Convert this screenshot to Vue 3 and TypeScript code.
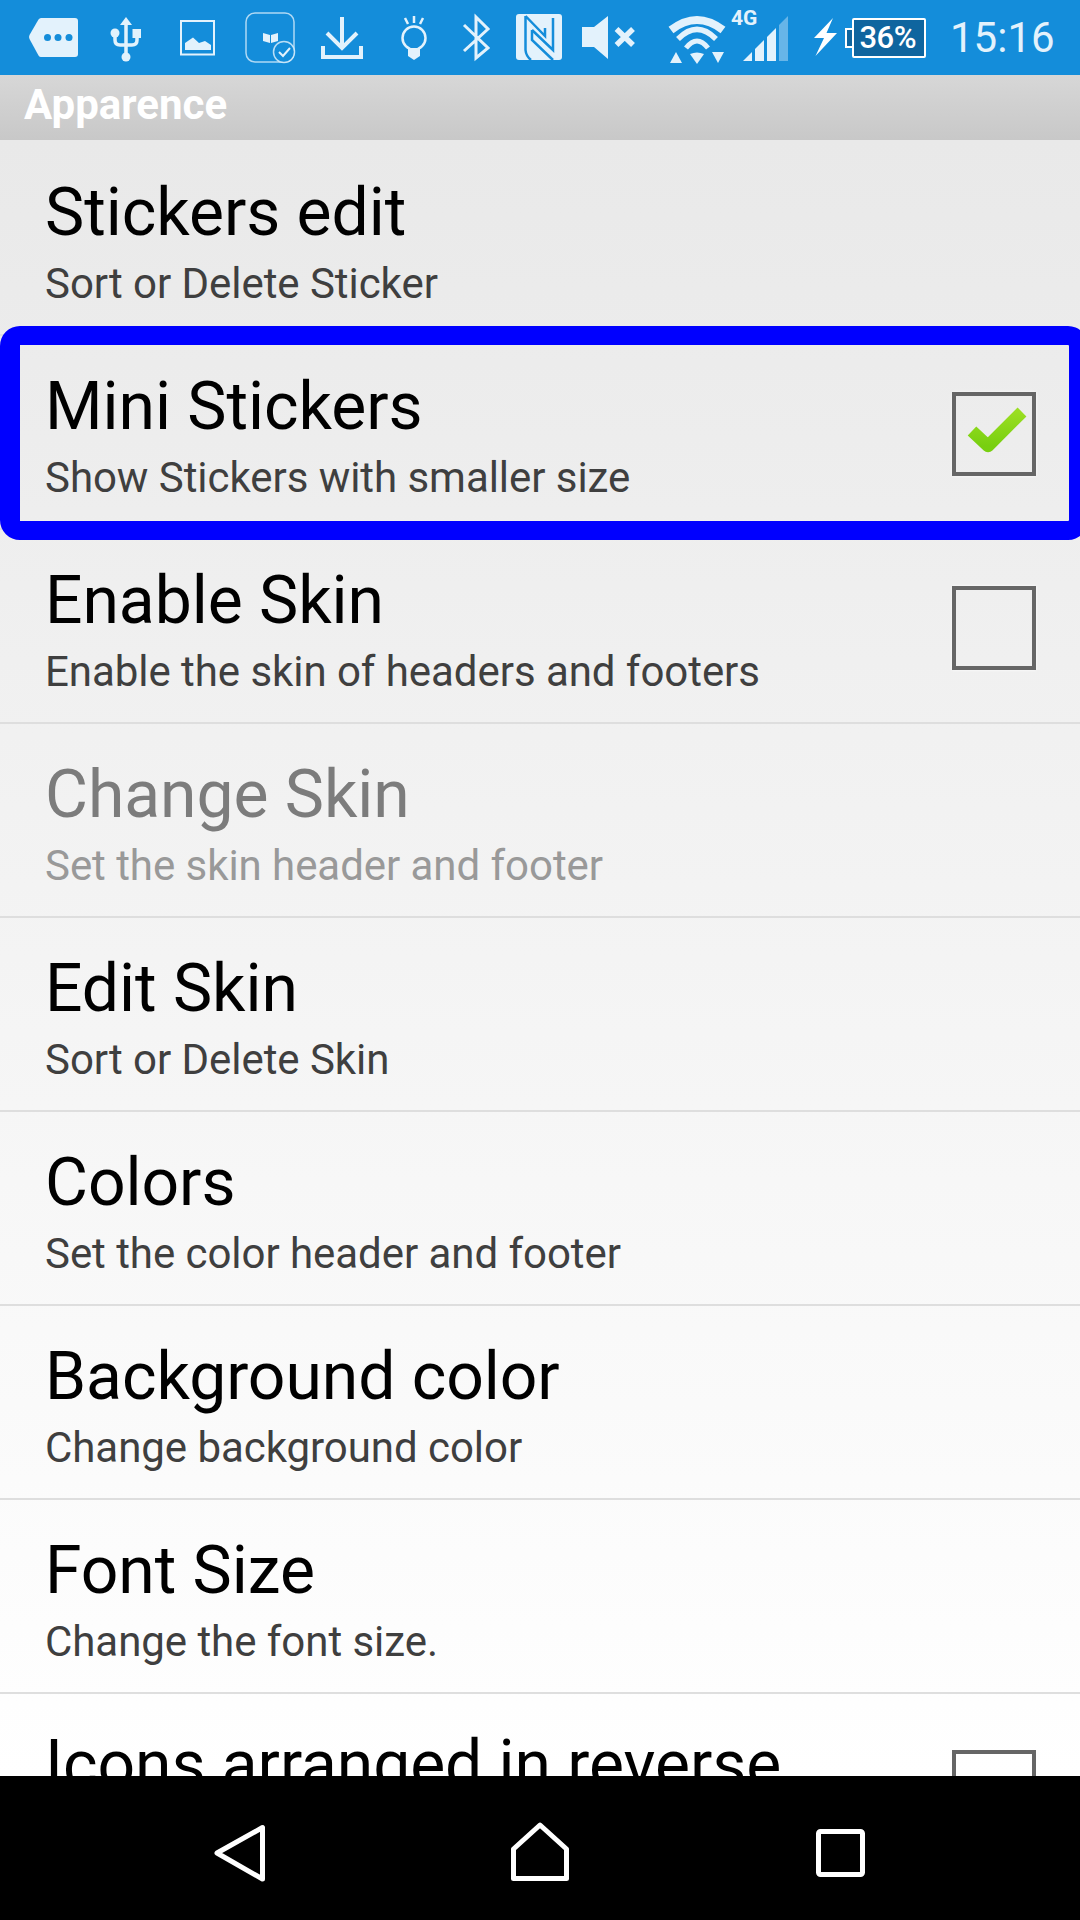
<template>
  <div class="screen">
    <div class="status-bar">
      <svg class="ic" width="80" height="75" viewBox="20 0 80 75">
        <path d="M41 18H75q3 0 3 3V54q0 3-3 3H41q-1.500 0-2.500-1.500L29.500 39q-1-2 0-4L38.500 19.500Q39.500 18 41 18Z" fill="#e3f2fc" />
        <circle cx="47.500" cy="37.500" r="3.500" fill="#148dda" />
        <circle cx="58" cy="37.500" r="3.500" fill="#148dda" />
        <circle cx="69" cy="37.500" r="3.500" fill="#148dda" />
      </svg>
      <svg class="ic" width="70" height="75" viewBox="100 0 70 75">
        <path d="M126 17l6 8H120Z" fill="#e3f2fc" />
        <path d="M126 24V55M115 33V40q0 5 5 5H132q5 0 5-5V36" fill="none" stroke="#e3f2fc" stroke-width="3.500" />
        <circle cx="126" cy="57" r="4.500" fill="#e3f2fc" />
        <circle cx="115" cy="33" r="4.500" fill="#e3f2fc" />
        <rect x="132.500" y="29" width="8.500" height="9" fill="#e3f2fc" />
      </svg>
      <svg class="ic" width="65" height="75" viewBox="170 0 65 75">
        <rect x="181" y="21" width="33" height="33.500" fill="none" stroke="#e3f2fc" stroke-width="2" />
        <path d="M185 50V43L193 37.500L199 43L205 41L211 45V50Z" fill="#e3f2fc" />
      </svg>
      <svg class="ic" width="70" height="75" viewBox="235 0 70 75">
        <rect x="246" y="13" width="48" height="49" rx="9" fill="none" stroke="#e3f2fc" stroke-opacity=".75" stroke-width="1.500" />
        <path d="M263 33l7 2V43l-7-2ZM271 35l7-2V41l-7 2Z" fill="#e3f2fc" />
        <circle cx="284" cy="52" r="10.500" fill="#148dda" stroke="#e3f2fc" stroke-opacity=".8" stroke-width="1.500" />
        <path d="M279 52l4 4 7-8" fill="none" stroke="#e3f2fc" stroke-width="2" />
      </svg>
      <svg class="ic" width="75" height="75" viewBox="305 0 75 75">
        <path d="M342 17V47M327 33L342 48L357 33" fill="none" stroke="#e3f2fc" stroke-width="4" />
        <path d="M323 46V57H361V46" fill="none" stroke="#e3f2fc" stroke-width="4" />
      </svg>
      <svg class="ic" width="70" height="75" viewBox="380 0 70 75">
        <circle cx="414" cy="38" r="11.500" fill="none" stroke="#e3f2fc" stroke-width="2.500" />
        <path d="M408 48H420V56L414 60L408 56Z" fill="#e3f2fc" />
        <path d="M414 16V23M405 18L408 24M423 18L420 24" fill="none" stroke="#e3f2fc" stroke-width="2.500" />
      </svg>
      <svg class="ic" width="55" height="75" viewBox="450 0 55 75">
        <path d="M464 25L488 48L476 58V17L488 29L464 51" fill="none" stroke="#e3f2fc" stroke-width="3" />
      </svg>
      <svg class="ic" width="65" height="75" viewBox="505 0 65 75">
        <rect x="516" y="14" width="46" height="46" rx="3" fill="#e3f2fc" />
        <path d="M525.500 16V50Q526 56 531 60M525.500 16L545 36V28M553 18V50L532 30" fill="none" stroke="#148dda" stroke-width="2.500" />
        <path d="M532 30V40L553 60" fill="none" stroke="#148dda" stroke-width="2.500" />
      </svg>
      <svg class="ic" width="90" height="75" viewBox="570 0 90 75">
        <path d="M582 27H594L608 16V59L594 47H582Z" fill="#e3f2fc" />
        <path d="M616.500 29L633 45M633 29L616.500 45" fill="none" stroke="#e3f2fc" stroke-width="5.500" />
      </svg>
      <svg class="ic" width="68" height="75" viewBox="660 0 68 75">
        <path d="M671 30Q697 10 723 30" fill="none" stroke="#e3f2fc" stroke-width="8" />
        <path d="M678 39Q697 20 716 39" fill="none" stroke="#e3f2fc" stroke-width="5.500" />
        <path d="M686 48Q697 34 708 48" fill="none" stroke="#e3f2fc" stroke-width="5" />
        <path d="M690 54Q697 51 704 54L697 64Z" fill="#e3f2fc" />
        <path d="M676 52L682 63H670Z" fill="#e3f2fc" />
        <path d="M712 52H724L718 63Z" fill="#e3f2fc" />
      </svg>
      <svg class="ic" width="72" height="75" viewBox="728 0 72 75">
        <text x="731" y="25" class="net">4G</text>
        <path d="M743 61L752 52V61Z" fill="#e3f2fc" />
        <path d="M755 49L764 40V61H755Z" fill="#e3f2fc" />
        <path d="M767 37L776 28V61H767Z" fill="#e3f2fc" />
        <path d="M779 25L788 16V61H779Z" fill="#e3f2fc" fill-opacity=".4" />
      </svg>
      <svg class="ic" width="45" height="75" viewBox="800 0 45 75">
        <path d="M833 18L814 38H824L815.500 56L837 33H826.500Z" fill="#fff" />
      </svg>
      <div class="battery">36%</div>
      <span class="time">15:16</span>
    </div>

    <div class="section-header">Apparence</div>

    <div class="list">
      <div
        v-for="item in items"
        :key="item.title"
        class="row"
        :class="{ disabled: item.disabled }"
      >
        <div class="row-text">
          <div class="row-title">{{ item.title }}</div>
          <div v-if="item.summary" class="row-summary">{{ item.summary }}</div>
        </div>
        <div v-if="item.check !== undefined" class="checkbox">
          <svg v-if="item.check" width="76" height="76" viewBox="0 0 76 76">
            <defs>
              <linearGradient id="tick" x1="0" y1="0" x2="0" y2="1">
                <stop offset="0" stop-color="#9ade22" />
                <stop offset="1" stop-color="#78cf10" />
              </linearGradient>
            </defs>
            <path d="M16 35L32 50L66 16" fill="none" stroke="url(#tick)" stroke-width="12.500" stroke-linejoin="round" />
          </svg>
        </div>
        <div v-if="item.highlight" class="highlight"></div>
      </div>
    </div>

    <div class="nav-bar">
      <svg width="60" height="70" viewBox="0 0 60 70">
        <path d="M52.500 7.500V59L7 33Z" fill="none" stroke="#fff" stroke-width="5" stroke-linejoin="round" />
      </svg>
      <svg width="60" height="70" viewBox="0 0 60 70">
        <path d="M30 5L56.500 29V58.500H3.500V29Z" fill="none" stroke="#fff" stroke-width="5" stroke-linejoin="round" />
      </svg>
      <svg width="60" height="70" viewBox="0 0 60 70">
        <rect x="8.500" y="11.500" width="44" height="43" rx="2" fill="none" stroke="#fff" stroke-width="5" />
      </svg>
    </div>
  </div>
</template>

<script setup lang="ts">
interface PrefItem {
  title: string
  summary?: string
  check?: boolean
  disabled?: boolean
  highlight?: boolean
}

const items: PrefItem[] = [
  { title: 'Stickers edit', summary: 'Sort or Delete Sticker' },
  { title: 'Mini Stickers', summary: 'Show Stickers with smaller size', check: true, highlight: true },
  { title: 'Enable Skin', summary: 'Enable the skin of headers and footers', check: false },
  { title: 'Change Skin', summary: 'Set the skin header and footer', disabled: true },
  { title: 'Edit Skin', summary: 'Sort or Delete Skin' },
  { title: 'Colors', summary: 'Set the color header and footer' },
  { title: 'Background color', summary: 'Change background color' },
  { title: 'Font Size', summary: 'Change the font size.' },
  // only the top of this last row shows above the nav bar
  { title: 'Icons arranged in reverse', check: false },
]
</script>

<style scoped>
.screen {
  width: 1080px;
  height: 1920px;
  display: flex;
  flex-direction: column;
  overflow: hidden;
  font-family: Roboto, "Liberation Sans", sans-serif;
}

.status-bar {
  height: 75px;
  flex: none;
  display: flex;
  align-items: center;
  padding-left: 20px;
  background: #148dda;
}

.ic {
  flex: none;
  display: block;
}

.net {
  font-family: Roboto, sans-serif;
  font-size: 21px;
  font-weight: 700;
  fill: #e3f2fc;
}

.battery {
  position: relative;
  box-sizing: border-box;
  width: 74px;
  height: 40px;
  margin-left: 7px;
  border: 2px solid #fff;
  border-radius: 2px;
  background: #0f659f;
  color: #fff;
  font-size: 31px;
  font-weight: 500;
  line-height: 36px;
  text-align: right;
  padding-right: 8px;
  letter-spacing: -0.5px;
}

.battery::before {
  content: "";
  position: absolute;
  left: -9px;
  top: 8px;
  width: 7px;
  height: 20px;
  box-sizing: border-box;
  border: 2px solid #fff;
  border-right: 0;
  background: #0f659f;
}

.time {
  margin-left: 24px;
  color: #e3f2fc;
  font-size: 42px;
  line-height: 75px;
}

.section-header {
  height: 65px;
  flex: none;
  box-sizing: border-box;
  padding-left: 24px;
  background: linear-gradient(#d7d7d7, #c8c8c8);
  color: #fff;
  font-size: 42px;
  font-weight: 700;
  line-height: 60px;
}

.list {
  flex: 1;
  min-height: 0;
  overflow: hidden;
  padding-top: 2px;
  background: linear-gradient(#e9e9e9, #ffffff);
}

.row {
  position: relative;
  box-sizing: border-box;
  height: 194px;
  display: flex;
  align-items: center;
  justify-content: space-between;
  padding: 0 44px 0 45px;
  border-bottom: 2px solid #dedede;
}

.row-text {
  align-self: flex-start;
  padding-top: 32px;
}

.row-title {
  color: #000;
  font-size: 66px;
  line-height: 78px;
  letter-spacing: -0.05px;
}

.row-summary {
  margin-top: 7px;
  color: #3f3f3f;
  font-size: 42px;
  line-height: 50px;
  letter-spacing: -0.05px;
}

.disabled .row-title {
  color: #7c7c7c;
}

.disabled .row-summary {
  color: #999;
}

.checkbox {
  box-sizing: border-box;
  width: 84px;
  height: 84px;
  margin-top: 4px;
  border: 4px solid #666;
  box-shadow: 0 0 3px #fff;
}

.checkbox svg {
  display: block;
}

.highlight {
  position: absolute;
  left: 0;
  top: -10px;
  box-sizing: border-box;
  width: 1088px;
  height: 214px;
  border: 19px solid #0000ff;
  border-left-width: 20px;
  border-radius: 20px;
}

.nav-bar {
  height: 144px;
  flex: none;
  display: flex;
  justify-content: center;
  align-items: center;
  gap: 240px;
  padding-top: 14px;
  box-sizing: border-box;
  background: #000;
}

.nav-bar svg {
  display: block;
}
</style>
